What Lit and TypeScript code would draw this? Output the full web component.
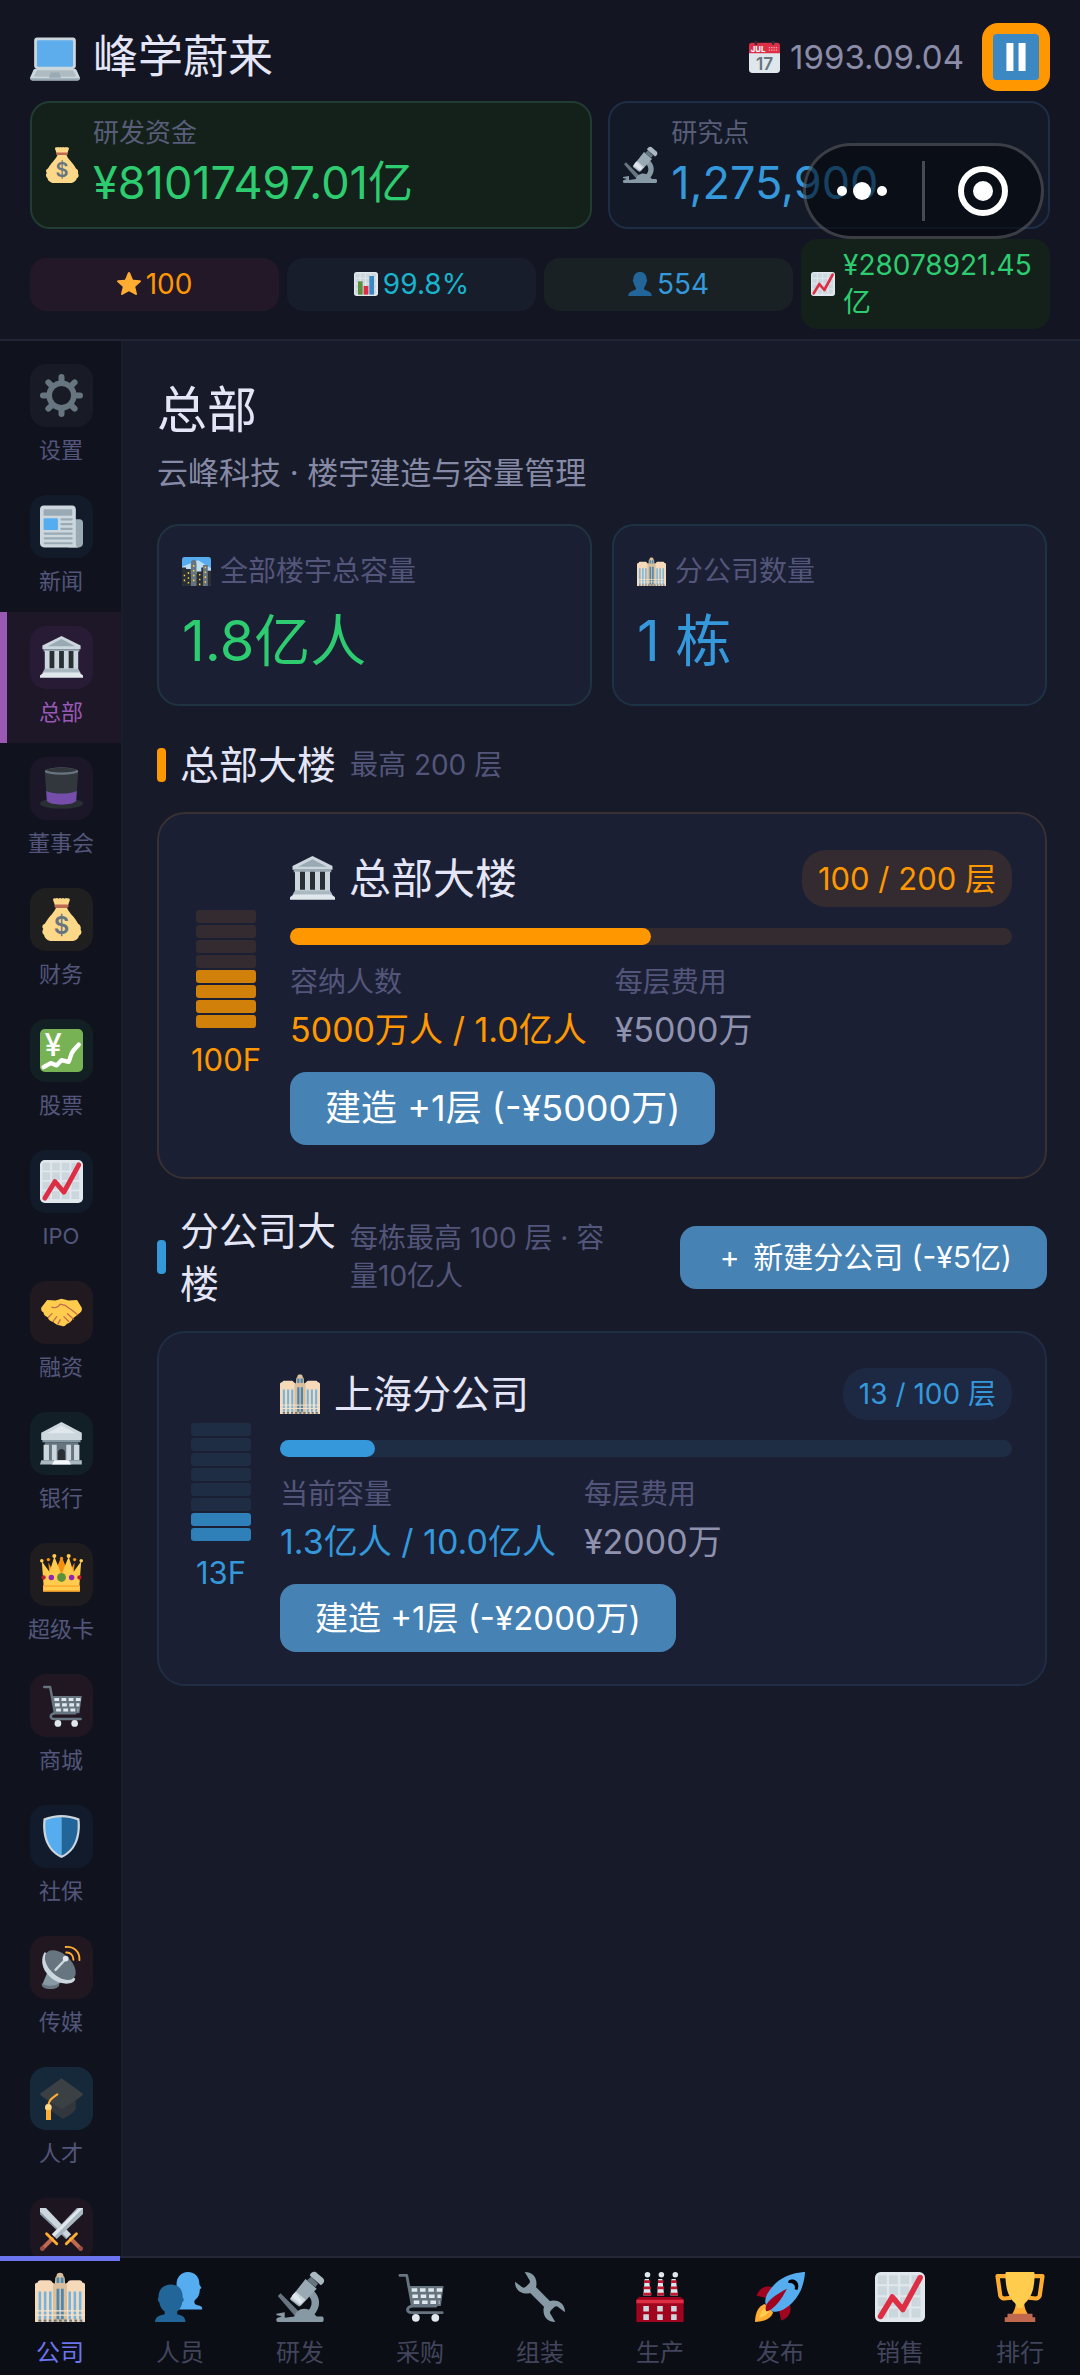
import { LitElement, html, css, svg } from 'lit';
import { customElement, property, state } from 'lit/decorators.js';
import { classMap } from 'lit/directives/class-map.js';

// All icons share a 36x36 canvas.
const chartGrid = svg`
  <rect width="36" height="36" rx="4" fill="#e1e8ed" />
  <path
    d="M2 5.5h32M2 13.5h32M2 21.5h32M2 29.5h32"
    stroke="#ccd6dd"
    stroke-width="6.5"
    stroke-dasharray="6.5 1.6"
  />
`;

const icons = {
  laptop: svg`
    <path fill="#ccd6dd" d="M34 28.500c-.4-1-.9-2-2-2h-1c1.100 0 2-.9 2-2V6c0-1.100-.9-2-2-2H5c-1.100 0-2 .9-2 2v18.500c0 1.100.9 2 2 2H4c-1.100 0-1.700 1-2 2L0 33c0 1.100.9 2 2 2h32c1.100 0 2-.9 2-2z" />
    <path fill="#9aaab4" d="M0 33.300C.2 34.300 1 35 2 35h32c1 0 1.800-.7 2-1.700z" />
    <rect x="5" y="6" width="26" height="19" rx="1" fill="#5dadec" />
    <path fill="#aebbc1" d="M5 27.500h26l2 3.800c0 .7-.4.9-1 .9H4c-.6 0-1-.3-1-.9z" />
    <path fill="#9aaab4" d="M15 29.200h6l1.300 3.300c0 .3-.3.500-.7.500h-7.200c-.4 0-.7-.2-.7-.5z" />
  `,
  calendar: svg`
    <rect y="4" width="36" height="32" rx="4" fill="#e0e7ec" />
    <path fill="#dd2f45" d="M0 13V4c0-1.700 1.300-3 3-3h30c1.700 0 3 1.300 3 3v9z" />
    <path stroke="#292f33" stroke-width="3" stroke-linecap="round" d="M8 0v2M28 0v2" />
    <path stroke="#f5abb5" stroke-width="1.500" stroke-dasharray="1.500 1.200" d="M23 6.500h11M23 9.500h11" />
    <text x="2" y="11.500" font-size="9" font-weight="800" fill="#f5f8fa">JUL</text>
    <text x="18" y="32" font-size="20" font-weight="600" text-anchor="middle" fill="#66757f">17</text>
  `,
  moneybag: svg`
    <path fill="#fdd888" d="M31.900 21.500c-1.200-2.600-3.300-5.300-6-8.200-1.400-1.500-2.800-3.700-3.400-5.300h-9c-.6 1.600-2 3.800-3.400 5.300-2.700 2.900-4.600 5.600-6.100 8.200-2.200.7-2.600 3-1.200 4.300-1.300 1.800-1 4.200.6 5.200.2 2.200 2 4 5 5h19.200c3-.9 4.800-2.600 5-4.500 2.200-.8 2.600-3.400 1.400-4.900.6-2.200-.2-4.300-2.100-5.100z" />
    <path fill="#fdd888" d="M12.500 6 11 1.800c-.3-1 .8-2 1.800-1.300C13.600-.3 15-.2 15.500.6c.8-.8 2-.8 2.500 0 .6-.8 1.900-.8 2.500 0 .7-.8 2-.8 2.600-.1 1-.7 2.100.3 1.800 1.300L23.500 6z" />
    <rect x="12" y="5.500" width="12" height="2.600" rx="1.300" fill="#bf6952" />
    <text x="18" y="30" font-size="20" font-weight="600" text-anchor="middle" fill="#67757f">$</text>
  `,
  microscope: svg`
    <path fill="#66757f" d="m2 17.300 2-2 13.500 13.500-3 3z" />
    <path fill="#8899a6" d="M27 13c6 4.500 6.500 12.500.5 18.500L23 29c3.800-3.500 4.500-8 1.500-11.500z" />
    <path fill="#8899a6" d="M14 32c1-5 8-8 13-3l3 3h4c1.400 0 1.400 4 0 4H2c-1.400 0-1.400-3 0-3l3-1-4-1v-1l6-1v4z" />
    <path fill="#99aab5" d="m11 19 11-14 8 7-11 12c-1 1-2 1-3 0l-5-4z" />
    <path fill="#ccd6dd" d="m11 19 4-5 7 6-4 4z" />
    <path fill="#e1e8ed" d="m12 17.500 2-2.500 6 6-1.500 2z" />
    <path fill="#66757f" d="m23 6 3-2.500 5 5L29 11z" />
    <path fill="#aab8c2" d="M25 2.500C26-.5 29-1 30.500 1L34 4c2 1.500 2 4-1 5.500z" />
  `,
  star: svg`
    <path fill="#ffac33" d="M19.600 1.200 24 11.500l10.500.9c1.500.2 2 1.600.9 2.600l-8 7 2.500 10.500c.3 1.500-.9 2.400-2.200 1.600L18 28.700l-9.700 5.400c-1.300.8-2.500-.1-2.200-1.600L8.600 22l-8-7c-1.100-1-.6-2.400.9-2.600l10.500-.9 4.400-10.300c.7-1.500 2.500-1.500 3.200 0z" />
  `,
  bars: svg`
    ${chartGrid}
    <path fill="#5c913b" d="M6 14h7v20H6z" />
    <path fill="#dd2e44" d="M14.500 21h7v13h-7z" />
    <path fill="#3b88c3" d="M23 6h7v28h-7z" />
  `,
  trend: svg`
    ${chartGrid}
    <path fill="none" stroke="#dd2e44" stroke-width="4" stroke-linecap="round" stroke-linejoin="round" d="M4 32 12.500 18 20 27 32.500 4" />
  `,
  person: svg`
    <path fill="#226699" d="M24 25c0-2 1-3 2-4.500 1-1.800 1.500-3.500 1.700-5.500 1.300-.5 1.500-3.500.3-4C28 4 24 0 18 0S8 4 8 11c-1.200.5-1 3.500.3 4 .2 2 .7 3.700 1.700 5.500 1 1.500 2 2.500 2 4.500 0 3-11 3-11.500 9.500V36h35v-1.500C35 28 24 28 24 25z" />
  `,
  gear: svg`
    <circle cx="18" cy="18" r="10.300" fill="none" stroke="#66757f" stroke-width="4.600" />
    <path stroke="#66757f" stroke-width="5" stroke-linecap="round" d="M18 2.500V7M18 29v4.500M2.500 18H7M29 18h4.500M7 7l3 3M26 26l3 3M29 7l-3 3M10 26l-3 3" />
  `,
  news: svg`
    <path fill="#99aab5" d="M27 12h6c2 0 3 1.500 3 3v17c0 2-1.500 3.500-3.500 3.500H24z" />
    <path fill="#ccd6dd" d="M3 .5h24c1.700 0 3 1.300 3 3V32c0 2 .5 3 2 3.500H3.500c-2 0-3.500-1.500-3.500-3.500V3.500c0-1.700 1.300-3 3-3z" />
    <rect x="3" y="3.500" width="24" height="5.500" rx="1" fill="#99aab5" />
    <rect x="3" y="11" width="12" height="10" rx="1" fill="#55acee" />
    <path stroke="#99aab5" stroke-width="1.800" stroke-linecap="round" d="M18 12h8.500M18 16h8.500M18 20h8.500M4 24h22.500M4 28h22.500M4 32h22.500" />
  `,
  hall: svg`
    <path fill="#ccd6dd" d="M18 0 34 8v3H2V8z" />
    <path fill="#99aab5" d="M18 2.500 29.500 8.500h-23z" />
    <path fill="#99aab5" d="M3 11h30v2H3z" />
    <path fill="#ccd6dd" d="M4 12.500h28V28H4z" />
    <path fill="#292f33" d="M8 12.500h4V27H8zM16 12.500h4V27h-4zM24 12.500h4V27h-4z" />
    <path fill="#aab8c2" d="M4 27.500h28L34 31H2z" />
    <path fill="#e1e8ed" d="M3 30.500h30l3 2.500v2H0v-2z" />
  `,
  hat: svg`
    <ellipse cx="18" cy="30.500" rx="18" ry="4.500" fill="#292f33" />
    <path fill="#31373d" d="M4 4h28l-1.700 24H5.700z" />
    <path fill="#744eaa" d="M5.200 20c7 3 18.600 3 25.600 0l-.6 8.500c-3 4-21.400 4-24.400 0z" />
    <ellipse cx="18" cy="3.500" rx="14" ry="3" fill="#66757f" />
    <ellipse cx="18" cy="2.600" rx="12.500" ry="2" fill="#31373d" />
  `,
  stocks: svg`
    <rect width="36" height="36" rx="4" fill="#77b255" />
    <text x="11" y="23" font-size="26" font-weight="500" text-anchor="middle" fill="#fff">¥</text>
    <path fill="none" stroke="#fff" stroke-width="3.600" stroke-linecap="round" stroke-linejoin="round" d="m3 32 6-3.500 5 2 4-4.500 6 1.500c2-4 1-6 4-9.500l4.500-5" />
  `,
  handshake: svg`
    <path fill="#ffcc4d" d="m1 14 5-6.500 7 .5 5-1.500 6 1.500 7-.5L35 14c.5 2-.5 4-2.500 5l-5 4c-1 2.500-3 4-5 4.500-1 2-3 2.500-4.500 1.500-3 0-5.500-1.500-7-3-2.500-.5-4-2-4.500-4-2.500-1-3.500-2-3.500-4-1.500-.5-2.300-2-2-4z" />
    <path fill="none" stroke="#c1694f" stroke-width="1" stroke-linecap="round" d="M10 13.500c2 1 5 .5 7-2.500l4 1c4 3 8 5.500 10.500 8M23 19l5 4.500M20 21.500l4 4M7 22l3-3M11 25.500l3-4M15 27.500l2-3.500" />
  `,
  bank: svg`
    <path fill="#ccd6dd" d="M18 0 35 9v6H1V9z" />
    <path fill="#e1e8ed" d="m18 3 12 6.500H6z" />
    <path fill="#8899a6" d="M2 15h32v2H2z" />
    <path fill="#66757f" d="M4 17h28v15H4z" />
    <path fill="#ccd6dd" d="M3 19h4.500v13H3zM10 19h4v13h-4zM22 19h4v13h-4zM28.500 19H33v13h-4.500z" />
    <path fill="#292f33" d="M15 32v-6.500c0-4 6-4 6 0V32z" />
    <path fill="#aab8c2" d="M1 32h34v3.500H0z" />
    <path fill="#f5f8fa" d="M12 32h12l2 3.500H10z" />
  `,
  crown: svg`
    <path fill="#f4900c" d="m4 13 4 7-1-12 5 9 5.500-13h1L24 17l5-9-1 12 4-7-2 18H6z" />
    <path fill="#ffcc4d" d="M1.500 7 8 16l4-13 6 15 6-15 4 13 6.500-9L33 27v5H3v-5z" />
    <path fill="#ffac33" d="M2.500 27h31v5.500h-31z" />
    <path fill="#ffcc4d" d="M3 28.500h30v2.500H3z" />
    <g fill="#ffcc4d">
      <circle cx="1.500" cy="6.500" r="1.500" /><circle cx="34.500" cy="6.500" r="1.500" />
      <circle cx="12" cy="2.500" r="1.700" /><circle cx="24" cy="2.500" r="1.700" />
    </g>
    <circle cx="7" cy="5.500" r="1.400" fill="#f4900c" /><circle cx="29" cy="5.500" r="1.400" fill="#f4900c" />
    <circle cx="18" cy="4.500" r="1.400" fill="#f4900c" />
    <circle cx="18" cy="20.500" r="3.700" fill="#5c913b" />
    <circle cx="9.500" cy="20.500" r="2.300" fill="#9224bb" /><circle cx="26.500" cy="20.500" r="2.300" fill="#9224bb" />
    <circle cx="3" cy="20.500" r="1.800" fill="#be1931" /><circle cx="33" cy="20.500" r="1.800" fill="#be1931" />
  `,
  cart: svg`
    <path fill="none" stroke="#66757f" stroke-width="2" stroke-linecap="round" stroke-linejoin="round" d="M3.500 2.500h5l4 22h17" />
    <path fill="#66757f" d="M9.500 10H35l-2 14.500H12z" />
    <path stroke="#e1e8ed" stroke-width="2.600" stroke-dasharray="4 2" d="M12 13h22M12.500 17.500h20.500M13.500 21.800h18.500" />
    <path fill="none" stroke="#66757f" stroke-width="2" stroke-linecap="round" d="M12 24.500c-4 1-4 4.500 0 4.800h22" />
    <circle cx="15" cy="33" r="2.800" fill="#e1e8ed" /><circle cx="29" cy="33" r="2.800" fill="#e1e8ed" />
  `,
  shield: svg`
    <path fill="#ccd6dd" d="M18 0c5 0 10 1 15 3 1.500 12-1 27-15 33C4 30 1.500 15 3 3c5-2 10-3 15-3z" />
    <path fill="#55acee" d="M18 1.800c-4.500 0-9 .8-13.300 2.500C3.600 15 6 28.500 18 34z" />
    <path fill="#226699" d="M18 1.800c4.500 0 9 .8 13.300 2.500C32.400 15 30 28.500 18 34z" />
  `,
  dish: svg`
    <path fill="#8899a6" d="M7 20 2 32c0 5 14 5 14 0l2-5z" />
    <path fill="#66757f" d="M1.500 31c2 3 12 3 14.500 0v2c-2 4-13 4-14.500 0z" />
    <path fill="#ccd6dd" d="M4 5C-3 16 8 31 22 31.500c4 0 7-1 7.500-4z" />
    <ellipse cx="17" cy="16" rx="15.500" ry="9" transform="rotate(43 17 16)" fill="#66757f" />
    <path stroke="#ccd6dd" stroke-width="2" stroke-linecap="round" d="m13 20 8-8.500" />
    <circle cx="21.500" cy="10.500" r="2.400" fill="#e1e8ed" />
    <path fill="none" stroke="#ffac33" stroke-width="1.600" stroke-linecap="round" d="M22 5.500c3.500-.3 6 2.300 6 6M21.500.8c7-.8 12 4.200 11.500 11" />
  `,
  cap: svg`
    <path fill="#31373d" d="M9 18h21v9c-3 4-7 6-11 8l-10-7z" />
    <path fill="#3b4045" d="M18 1 36 14c0 2-7 6-18 13C8 20 0 16 0 14z" />
    <path fill="none" stroke="#ffac33" stroke-width="1.800" stroke-linecap="round" d="M14.500 14.500C10 18 7 19 7 25" />
    <circle cx="7" cy="25.500" r="2.800" fill="#ffd983" />
    <path fill="#ffac33" d="M5 27.500h4.200V36H5z" />
  `,
  swords: svg`
    <path fill="#ccd6dd" d="M0 0h5l21 22-4 4L0 5z" />
    <path fill="#8899a6" d="m0 3 23 22.500L22 26 0 5z" />
    <path fill="#aab8c2" d="M36 0h-5L10 22l4 4L36 5z" />
    <path fill="#e1e8ed" d="M33 0h3L12 24l-2-2z" />
    <path stroke="#bf6952" stroke-width="3.400" stroke-linecap="round" d="m26 26 8 8M10 26l-8 8" />
    <path stroke="#ffac33" stroke-width="2.400" stroke-linecap="round" d="m22 30 8.500-8.500M14 30l-8.500-8.500" />
    <circle cx="34" cy="34" r="2" fill="#9a4e42" /><circle cx="2" cy="34" r="2" fill="#9a4e42" />
  `,
  office: svg`
    <path fill="#f5d9b8" d="M0 9c0-1 1-1.500 2-1.500 0-1 1-1.500 2-1.500h6c1.500 0 2 .5 2.500 1.500l1.500 1V36H0zM36 9c0-1-1-1.500-2-1.500 0-1-1-1.500-2-1.500h-6c-1.500 0-2 .5-2.500 1.500l-1.500 1V36h14z" />
    <path fill="#d9bf9e" d="M13 9c1 0 1.500-1 1.500-3s.5-3 1-3c0-2 1-2.500 2.500-2.500s2.500.5 2.500 2.500c.5 0 1 1 1 3s.5 3 1.500 3v27H13z" />
    <path stroke="#6fb4e4" stroke-width="1.800" d="M3.500 14v20M7.300 14v20M11 14v20M25 14v20M28.700 14v20M32.500 14v20" />
    <path stroke="#4d87b0" stroke-width="2" d="M16.500 12v22M19.700 12v22M16.500 4v4M19.500 4v4" />
    <path stroke="#f5e3cb" stroke-width=".9" d="M0 28h36M0 31h36" />
    <path stroke="#66757f" stroke-width="1.500" stroke-dasharray="2 1.700" d="M2.500 35h32" />
  `,
  city: svg`
    <rect width="36" height="36" rx="3" fill="#55acee" />
    <path fill="#bbddf5" d="M0 12 20 4l16 10v8H0z" />
    <path fill="#292f33" d="M0 13h5v2h6v6h7v-3h6v-5h5v4h7v16c0 2-1 3-3 3H3c-2 0-3-1-3-3z" />
    <path fill="#66757f" d="M11 8c0-6 7-6 7 0v28h-7zM26 10h6v26h-6z" />
    <path stroke="#ffcc4d" stroke-width="1.800" stroke-dasharray="2 4" d="M14.500 10v20M29 12v20M8 19v14M22 21v14M3 22v10" />
  `,
  people: svg`
    <path fill="#55acee" d="M15.500 9C15.500 3.500 19 0 23.500 0 29 0 32 3.500 32 9l1.500 2.500-1.200 1c-.2 4-1.300 6-3.300 7.500-1.500 1.500-.5 3.500 1.500 4 3 .5 3.500 1 3.500 3H17z" />
    <path fill="#226699" d="M2.500 18.500C2.500 12.500 6 9 11.500 9S20 12.500 20 18.500c1 .3.800 3-.4 3.300-.3 2.700-1.600 5-3.600 6.700v2c3.500.8 5.500 1.500 6 5.500H0c.5-4 3-4.700 7-5.500v-2c-2.300-1.700-3.500-4-3.900-6.700-1.200-.3-1.400-3-.6-3.300z" />
  `,
  wrench: svg`
    <path fill="none" stroke="#8899a6" stroke-width="6" d="m10 10 16 16" />
    <path fill="#8899a6" d="M7 0c5 0 8.500 3 8.500 8.500 0 4-3 7-7 7C3 15.500 0 12 0 7l5 3.800c1 .7 2 .6 3-.3l2-2c1-1 1-2 .3-3z" />
    <path fill="#8899a6" d="M29 36c-5 0-8.500-3-8.500-8.500 0-4 3-7 7-7C33 20.500 36 24 36 29l-5-3.800c-1-.7-2-.6-3 .3l-2 2c-1 1-1 2-.3 3z" />
  `,
  factory: svg`
    <path fill="#e1e8ed" d="M6 17 7 5h3l1.500 12zM16 17l.7-12h3L21 17zM25.500 17l.8-12h3L31 17z" />
    <path stroke="#be1931" stroke-width="2" d="M6.500 7h4.500M6 11.500h5.500M6 16h6M16.500 7h4M16 11.500h5M16 16h5M26 7h4M25.500 11.500h5M25.500 16h5.500" />
    <g fill="#e1e8ed">
      <circle cx="9" cy="2" r="2" /><circle cx="19" cy="2" r="2" /><circle cx="29" cy="2" r="2" />
    </g>
    <path fill="#a0041e" d="M1 20 3 18h30l2 2v16H1z" />
    <path fill="#dd2e44" d="M1 20h34v2.500H1z" />
    <path fill="#ccd6dd" d="M6 24.500h4v4H6zM16 24.500h4v4h-4zM26 24.500h4v4h-4zM6 30.500h4v4H6zM16 30.500h4v4h-4zM26 30.500h4v4h-4z" />
  `,
  rocket: svg`
    <path fill="#a0041e" d="M1 17c2-5 6-8 12-6l-4 8zM19 35c5-2 8-6 6-12l-8 4z" />
    <path fill="#ffac33" d="M7 23c-4 1-7 6-7 13 7 0 12-3 13-7z" />
    <path fill="#ffcc4d" d="M9 25c-2 0-5 3-6 8 5-1 7-4 8-6z" />
    <path fill="#55acee" d="M36 0S23 0 14 9c-5 5-8 11-6 15l4 4c4 2 10-1 15-6 9-9 9-22 9-22z" />
    <path fill="#a0041e" d="M8 28c-1-2 0-5 3-8 4-4 12-8 12-8s-4 8-8 12c-3 3-6 5-7 4z" />
    <path fill="#000" d="M24 6.500c4-3 9 1 6.500 6.500l-2-.5c1-3-1-5-4.500-4.500z" />
  `,
  trophy: svg`
    <path fill="none" stroke="#ffac33" stroke-width="3" stroke-linejoin="round" d="M9 3H1.800l2 14c1 3 4 2 8 1.500M27 3h7.200l-2 14c-1 3-4 2-8 1.500" />
    <path fill="#ffac33" d="M15 22h6c0 4 1.500 6.500 3 9H12c1.500-2.500 3-5 3-9z" />
    <path fill="#ffcc4d" d="M7.500 1c0-.6.500-1 1-1h19c.500 0 1 .4 1 1 0 8-1 16-6.500 21-1 1-2 2.500-2 4h-4c0-1.500-1-3-2-4-5.500-5-6.500-13-6.500-21z" />
    <path fill="#c1694f" d="M9 30h18v2.500h2V36H7v-3.500h2z" />
  `,
  pause: svg`
    <rect width="36" height="36" rx="3" fill="#3b88c3" />
    <path fill="#fff" d="M10.500 7h5.500v22h-5.500zM20 7h5.500v22H20z" />
  `,
};

type IconName = keyof typeof icons;

interface MenuItem {
  icon: IconName;
  label: string;
  tint?: string;
}

const sideMenu: MenuItem[] = [
  { icon: 'gear', label: '设置', tint: '#181b26' },
  { icon: 'news', label: '新闻', tint: '#111b2a' },
  { icon: 'hall', label: '总部', tint: '#281b35' },
  { icon: 'hat', label: '董事会', tint: '#1b1729' },
  { icon: 'moneybag', label: '财务', tint: '#1f1f20' },
  { icon: 'stocks', label: '股票', tint: '#122023' },
  { icon: 'trend', label: 'IPO', tint: '#121b2a' },
  { icon: 'handshake', label: '融资', tint: '#201a20' },
  { icon: 'bank', label: '银行', tint: '#121f27' },
  { icon: 'crown', label: '超级卡', tint: '#1f1c1f' },
  { icon: 'cart', label: '商城', tint: '#201722' },
  { icon: 'shield', label: '社保', tint: '#121b2c' },
  { icon: 'dish', label: '传媒', tint: '#201721' },
  { icon: 'cap', label: '人才', tint: '#16293b' },
  { icon: 'swords', label: '', tint: '#1d1620' },
];

const bottomMenu: MenuItem[] = [
  { icon: 'office', label: '公司' },
  { icon: 'people', label: '人员' },
  { icon: 'microscope', label: '研发' },
  { icon: 'cart', label: '采购' },
  { icon: 'wrench', label: '组装' },
  { icon: 'factory', label: '生产' },
  { icon: 'rocket', label: '发布' },
  { icon: 'trend', label: '销售' },
  { icon: 'trophy', label: '排行' },
];

@customElement('game-icon')
export class GameIcon extends LitElement {
  @property() name: IconName = 'star';

  static styles = css`
    :host {
      display: block;
      flex: none;
      width: 24px;
      height: 24px;
    }

    svg {
      display: block;
      width: 100%;
      height: 100%;
      overflow: visible;
      font-family: Inter, sans-serif;
    }
  `;

  render() {
    return html`<svg viewBox="0 0 36 36" aria-hidden="true">${icons[this.name]}</svg>`;
  }
}

@customElement('building-card')
export class BuildingCard extends LitElement {
  @property() icon: IconName = 'office';
  @property() name = '';
  @property() capacityLabel = '';
  @property() capacity = '';
  @property() cost = '';
  @property({ type: Number }) floors = 0;
  @property({ type: Number }) maxFloors = 100;
  @property({ type: Boolean, reflect: true }) main = false;

  static styles = css`
    :host {
      --accent: #3498db;
      --track: #1e2c44;
      --line: #1f2d45;
      --pill: #1d2843;
      display: flex;
      align-items: center;
      gap: 29px;
      padding: 33px 33px 32px 32px;
      border: 2px solid var(--line);
      border-radius: 28px;
      background: #1b1f33;
    }

    :host([main]) {
      --accent: #ff9800;
      --track: #332b2f;
      --line: #383033;
      --pill: #332b2f;
    }

    .tower {
      display: flex;
      flex-direction: column;
      align-items: center;
      min-width: 60px;
      color: var(--accent);
      font-size: 31px;
      line-height: 44px;
    }

    .floors {
      display: grid;
      gap: 2px;
      width: 60px;
      margin-bottom: 10px;
    }

    .floor {
      height: 13px;
      border-radius: 3px;
      background: var(--track);
    }

    .floor.built {
      background: var(--accent);
      opacity: 0.8;
    }

    .info {
      flex: 1;
      min-width: 0;
    }

    .head {
      display: flex;
      align-items: center;
      gap: 14px;
      height: 56px;
      margin-bottom: 18px;
    }

    :host([main]) .head {
      height: 63px;
    }

    .head game-icon {
      width: 40px;
      height: 40px;
    }

    :host([main]) .head game-icon {
      width: 45px;
      height: 45px;
    }

    h3 {
      flex: 1;
      margin: 0;
      color: #e4e6f8;
      font-size: 39px;
      font-weight: 400;
      line-height: 56px;
    }

    :host([main]) h3 {
      font-size: 42px;
    }

    .pill {
      padding: 0 16px;
      border-radius: 24px;
      background: var(--pill);
      color: var(--accent);
      font-size: 28px;
      line-height: 52px;
    }

    :host([main]) .pill {
      font-size: 31px;
      line-height: 57px;
    }

    .progress {
      height: 17px;
      border-radius: 9px;
      background: var(--track);
    }

    .fill {
      height: 100%;
      border-radius: 9px;
      background: var(--accent);
    }

    dl {
      display: flex;
      gap: 28px;
      margin: 17px 0 14px;
    }

    dt {
      color: #53567a;
      font-size: 28px;
      line-height: 40px;
    }

    dd {
      margin: 0;
      color: #8f92ae;
      font-size: 34px;
      line-height: 56px;
    }

    dd.capacity {
      color: var(--accent);
    }

    button {
      display: block;
      padding: 0 35px;
      border: 0;
      border-radius: 16px;
      background: #4682b4;
      color: #fff;
      font: inherit;
      font-size: 33px;
      line-height: 68px;
    }

    :host([main]) button {
      font-size: 36px;
      line-height: 73px;
    }
  `;

  render() {
    const ratio = this.floors / this.maxFloors;
    const built = Math.ceil(ratio * 8);
    return html`
      <div class="tower">
        <div class="floors">
          ${Array.from(
            { length: 8 },
            (_, i) => html`<div class=${classMap({ floor: true, built: i >= 8 - built })}></div>`,
          )}
        </div>
        ${this.floors}F
      </div>
      <div class="info">
        <div class="head">
          <game-icon name=${this.icon}></game-icon>
          <h3>${this.name}</h3>
          <span class="pill">${this.floors} / ${this.maxFloors} 层</span>
        </div>
        <div class="progress"><div class="fill" style="width: ${ratio * 100}%"></div></div>
        <dl>
          <div>
            <dt>${this.capacityLabel}</dt>
            <dd class="capacity">${this.capacity}</dd>
          </div>
          <div>
            <dt>每层费用</dt>
            <dd>¥${this.cost}</dd>
          </div>
        </dl>
        <button type="button">建造 +1层 (-¥${this.cost})</button>
      </div>
    `;
  }
}

@customElement('app-root')
export class AppRoot extends LitElement {
  @state() private page = '总部';
  @state() private tab = '公司';

  static styles = css`
    :host {
      position: relative;
      display: grid;
      grid-template-rows: auto minmax(0, 1fr) auto;
      height: 100vh;
      background: #171a28;
      color: #e4e6f8;
      font-family: Inter, 'Noto Sans CJK SC', sans-serif;
    }

    * {
      box-sizing: border-box;
    }

    button {
      border: 0;
      font: inherit;
    }

    h1,
    h2,
    p {
      margin: 0;
      font-weight: 400;
    }

    header {
      display: grid;
      gap: 10px;
      padding: 23px 30px 10px;
      border-bottom: 2px solid #212434;
      background: #131522;
    }

    .topline,
    .brand,
    .date,
    .asset,
    .chip {
      display: flex;
      align-items: center;
    }

    .topline {
      gap: 18px;
      height: 68px;
    }

    .brand {
      flex: 1;
      gap: 13px;
      font-size: 45px;
      line-height: 64px;
    }

    .brand game-icon {
      width: 50px;
      height: 50px;
    }

    .date {
      gap: 10px;
      color: #8b8ca8;
      font-size: 33px;
      line-height: 48px;
    }

    .date game-icon {
      width: 31px;
      height: 31px;
    }

    .pause {
      display: grid;
      place-items: center;
      width: 68px;
      height: 68px;
      padding: 0;
      border-radius: 16px;
      background: #ff9800;
    }

    .pause game-icon {
      width: 46px;
      height: 46px;
    }

    .assets {
      display: grid;
      grid-template-columns: 14fr 11fr;
      gap: 16px;
    }

    .asset {
      gap: 13px;
      padding: 12px;
      border: 2px solid #1d2e46;
      border-radius: 20px;
      background: #131927;
      color: #3498db;
      font-size: 45px;
      line-height: 64px;
    }

    .asset.funds {
      border-color: #213c30;
      background: #13211a;
      color: #2ecc71;
    }

    .asset game-icon {
      width: 36px;
      height: 36px;
    }

    .asset-label {
      color: #585d78;
      font-size: 26px;
      line-height: 36px;
    }

    .chips {
      display: grid;
      grid-template-columns: repeat(4, minmax(0, 1fr));
      align-items: center;
      gap: 8px;
    }

    .chip {
      justify-content: center;
      gap: 5px;
      padding: 8px 10px;
      border-radius: 16px;
      font-size: 28px;
      line-height: 37px;
    }

    .chip span {
      min-width: 0;
      overflow-wrap: anywhere;
    }

    .chip.fame {
      background: #231828;
      color: #ff9800;
    }

    .chip.rate {
      background: #181d2b;
      color: #18b4cc;
    }

    .chip.staff {
      background: #1a2124;
      color: #3498db;
    }

    .chip.value {
      justify-content: flex-start;
      gap: 8px;
      background: #13211a;
      color: #2ecc71;
    }

    /* host app's floating menu, sits over the header */
    .capsule {
      position: absolute;
      top: 143px;
      right: 36px;
      display: flex;
      align-items: center;
      width: 241px;
      height: 96px;
      border: 3px solid #ffffff33;
      border-radius: 48px;
      background: #05060e99;
    }

    .capsule button {
      display: grid;
      flex: 1;
      place-items: center;
      height: 60px;
      padding: 0;
      background: none;
    }

    .capsule button + button {
      border-left: 3px solid #ffffff40;
    }

    .capsule svg {
      width: 54px;
      height: 54px;
      fill: #fff;
    }

    .body {
      display: grid;
      grid-template-columns: 123px minmax(0, 1fr);
      min-height: 0;
    }

    .side {
      overflow: hidden;
      padding-top: 9px;
      border-right: 2px solid #181c2b;
      background: #10131e;
    }

    .side-item {
      display: flex;
      flex-direction: column;
      align-items: center;
      gap: 7px;
      width: 100%;
      padding: 14px 6px 15px 7px;
      background: none;
      color: #53567a;
      font-size: 22px;
      line-height: 32px;
      white-space: nowrap;
    }

    .side-item.active {
      background: #1d1728;
      box-shadow: inset 7px 0 #9b59b6;
      color: #9b59b6;
    }

    .tile {
      display: grid;
      place-items: center;
      width: 63px;
      height: 63px;
      border-radius: 16px;
    }

    .tile game-icon {
      width: 43px;
      height: 43px;
    }

    main {
      overflow: hidden;
      padding: 35px 33px 35px 34px;
    }

    h1 {
      font-size: 50px;
      line-height: 68px;
    }

    .subtitle {
      margin: 7px 0 29px;
      color: #868aa6;
      font-size: 31px;
      line-height: 44px;
    }

    .totals {
      display: grid;
      grid-template-columns: 1fr 1fr;
      gap: 20px;
      margin-bottom: 32px;
    }

    .total {
      padding: 25px 24px 23px 23px;
      border: 2px solid #1d3345;
      border-radius: 22px;
      background: #1b1f33;
      color: #3498db;
      font-size: 56px;
      line-height: 80px;
    }

    .total.capacity {
      border-color: #1f3440;
      color: #2ecc71;
    }

    .total-label {
      display: flex;
      align-items: center;
      gap: 9px;
      margin-bottom: 10px;
      color: #53567a;
      font-size: 28px;
      line-height: 40px;
    }

    .total-label game-icon {
      width: 29px;
      height: 29px;
    }

    .section-head {
      display: flex;
      align-items: center;
      gap: 14px;
      margin-bottom: 21px;
      color: #53567a;
      font-size: 28px;
      line-height: 38px;
    }

    .section-head::before {
      flex: none;
      width: 9px;
      height: 34px;
      border-radius: 4px;
      background: #3498db;
      content: '';
    }

    .section-head.main::before {
      background: #ff9800;
    }

    .section-head h2 {
      flex: none;
      max-width: 4em;
      color: #e4e6f8;
      font-size: 39px;
      line-height: 53px;
    }

    .section-head p {
      max-width: 10em;
    }

    .new-branch {
      flex: none;
      margin-left: auto;
      padding: 0 35px;
      border-radius: 16px;
      background: #4682b4;
      color: #fff;
      font-size: 30px;
      line-height: 63px;
    }

    .plus {
      display: inline-block;
      width: 1em;
      text-align: center;
    }

    building-card + .section-head {
      margin-top: 25px;
    }

    .tabs {
      display: grid;
      grid-template-columns: repeat(9, minmax(0, 1fr));
      background: #0b0e15;
    }

    .tab {
      display: flex;
      flex-direction: column;
      align-items: center;
      gap: 13px;
      padding: 16px 0 4px;
      background: none;
      box-shadow: inset 0 2px #232634;
      color: #42455c;
      font-size: 24px;
      line-height: 36px;
    }

    .tab.active {
      box-shadow: inset 0 5px #6b74ee;
      color: #6b74ee;
    }

    .tab game-icon {
      width: 50px;
      height: 50px;
    }
  `;

  private renderHeader() {
    return html`
      <header>
        <div class="topline">
          <div class="brand"><game-icon name="laptop"></game-icon>峰学蔚来</div>
          <div class="date"><game-icon name="calendar"></game-icon>1993.09.04</div>
          <button class="pause" type="button" aria-label="暂停">
            <game-icon name="pause"></game-icon>
          </button>
        </div>
        <div class="assets">
          <div class="asset funds">
            <game-icon name="moneybag"></game-icon>
            <div>
              <div class="asset-label">研发资金</div>
              ¥81017497.01亿
            </div>
          </div>
          <div class="asset">
            <game-icon name="microscope"></game-icon>
            <div>
              <div class="asset-label">研究点</div>
              1,275,900
            </div>
          </div>
        </div>
        <div class="chips">
          <div class="chip fame"><game-icon name="star"></game-icon>100</div>
          <div class="chip rate"><game-icon name="bars"></game-icon>99.8%</div>
          <div class="chip staff"><game-icon name="person"></game-icon>554</div>
          <div class="chip value">
            <game-icon name="trend"></game-icon><span>¥28078921.45亿</span>
          </div>
        </div>
      </header>
    `;
  }

  private renderCapsule() {
    return html`
      <div class="capsule">
        <button type="button" aria-label="更多">
          <svg viewBox="0 0 54 54">
            <circle cx="5" cy="27" r="5" />
            <circle cx="25" cy="27" r="9" />
            <circle cx="45" cy="27" r="5" />
          </svg>
        </button>
        <button type="button" aria-label="关闭">
          <svg viewBox="0 0 54 54">
            <circle cx="27" cy="27" r="22" fill="none" stroke="#fff" stroke-width="6" />
            <circle cx="27" cy="27" r="10" />
          </svg>
        </button>
      </div>
    `;
  }

  private renderSide() {
    return html`
      <nav class="side">
        ${sideMenu.map(
          item => html`
            <button
              type="button"
              class=${classMap({ 'side-item': true, active: item.label === this.page })}
              aria-label=${item.label || '对战'}
              @click=${() => (this.page = item.label)}
            >
              <span class="tile" style="background: ${item.tint}">
                <game-icon name=${item.icon}></game-icon>
              </span>
              ${item.label}
            </button>
          `,
        )}
      </nav>
    `;
  }

  private renderMain() {
    return html`
      <main>
        <h1>总部</h1>
        <p class="subtitle">云峰科技 · 楼宇建造与容量管理</p>
        <div class="totals">
          <div class="total capacity">
            <div class="total-label"><game-icon name="city"></game-icon>全部楼宇总容量</div>
            1.8亿人
          </div>
          <div class="total">
            <div class="total-label"><game-icon name="office"></game-icon>分公司数量</div>
            1 栋
          </div>
        </div>

        <div class="section-head main">
          <h2>总部大楼</h2>
          <p>最高 200 层</p>
        </div>
        <building-card
          main
          icon="hall"
          name="总部大楼"
          capacityLabel="容纳人数"
          capacity="5000万人 / 1.0亿人"
          cost="5000万"
          floors="100"
          maxFloors="200"
        ></building-card>

        <div class="section-head">
          <h2>分公司大楼</h2>
          <p>每栋最高 100 层 · 容量10亿人</p>
          <button class="new-branch" type="button">
            <span class="plus">+</span> 新建分公司 (-¥5亿)
          </button>
        </div>
        <building-card
          icon="office"
          name="上海分公司"
          capacityLabel="当前容量"
          capacity="1.3亿人 / 10.0亿人"
          cost="2000万"
          floors="13"
          maxFloors="100"
        ></building-card>
      </main>
    `;
  }

  render() {
    return html`
      ${this.renderHeader()}
      <div class="body">${this.renderSide()} ${this.renderMain()}</div>
      <nav class="tabs">
        ${bottomMenu.map(
          item => html`
            <button
              type="button"
              class=${classMap({ tab: true, active: item.label === this.tab })}
              @click=${() => (this.tab = item.label)}
            >
              <game-icon name=${item.icon}></game-icon>
              ${item.label}
            </button>
          `,
        )}
      </nav>
      ${this.renderCapsule()}
    `;
  }
}
